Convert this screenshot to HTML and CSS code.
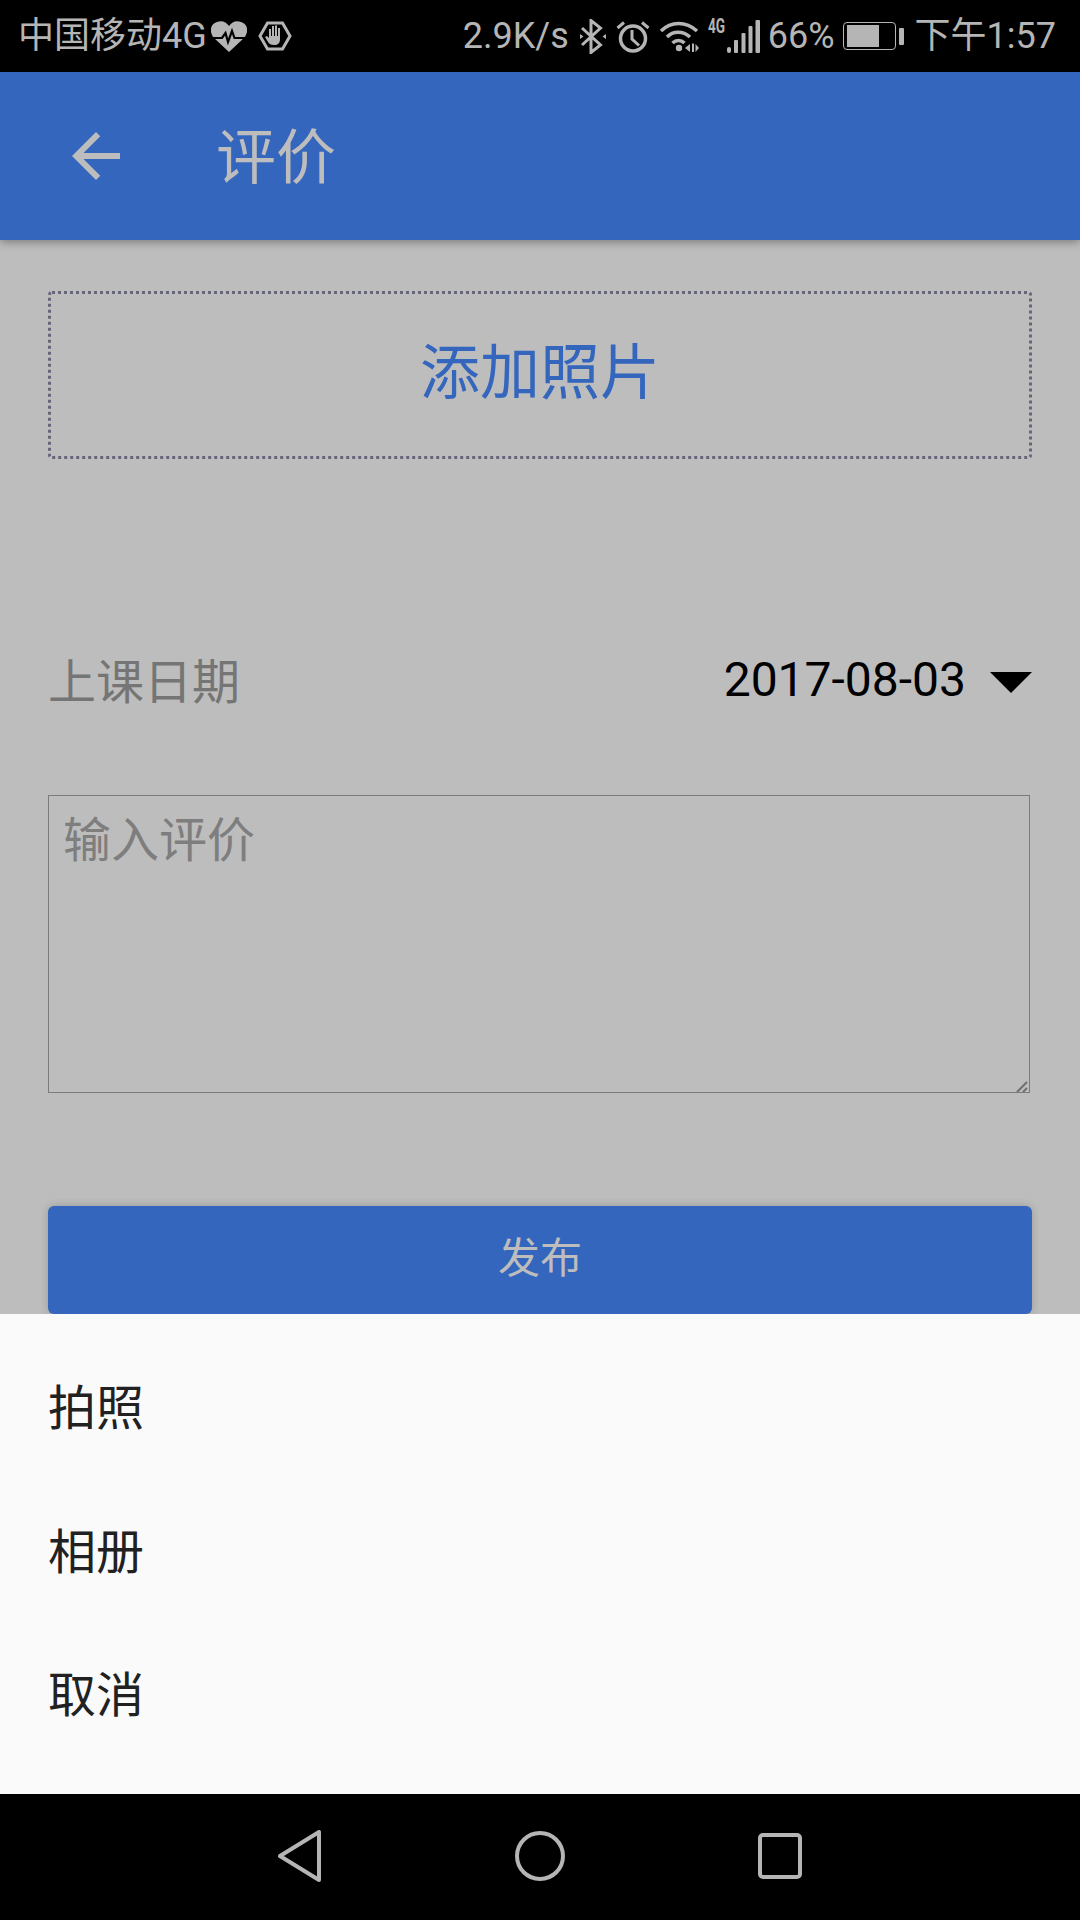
FILE: index.html
```html
<!DOCTYPE html>
<html lang="zh-CN">
<head>
  <meta charset="UTF-8">
  <title>评价</title>
  <link rel="stylesheet" href="styles.css">
</head>
<body>
<div class="screen">
  <div class="status-bar">
    <div class="status-left">
      <span class="carrier">中国移动4G</span>
      <svg class="icon-heart" width="36" height="31" viewBox="0 0 36 31">
        <path fill="#b5b5b5" d="M18 31 L3 17 C-2 11 -1 3 6 1 C11 -1 15 1 18 5 C21 1 25 -1 30 1 C37 3 38 11 33 17 Z"/>
        <path fill="none" stroke="#000" stroke-width="2.2" d="M0 17 H11 L14.5 12 L17 21 L21 10 L23.5 17 H36"/>
      </svg>
      <svg class="icon-hand" width="34" height="30" viewBox="0 0 34 30">
        <path fill="none" stroke="#b5b5b5" stroke-width="3" d="M9.5 2 H24.5 L32 15 L24.5 28 H9.5 L2 15 Z"/>
        <path fill="#b5b5b5" d="M11 8 h2 v7 h1 V5 h2 v10 h1 V4.500 h2 V15 h1 V7 h2 v11 c0 4 -2 6 -6 6 c-3 0 -5 -1 -6 -3 l-3 -5 l2 -1 l2 2 Z"/>
      </svg>
    </div>
    <div class="status-right">
      <span class="speed">2.9K/s</span>
      <svg class="icon-bt" width="26" height="35" viewBox="0 0 26 35">
        <path fill="none" stroke="#b5b5b5" stroke-width="3" d="M2 9 L20.500 26 L11 33.500 V1.500 L20.500 9 L2 26"/>
        <path fill="#b5b5b5" d="M0 15 L3.500 17.500 L0 20 Z M26 15 L22.500 17.500 L26 20 Z"/>
      </svg>
      <svg class="icon-alarm" width="34" height="33" viewBox="0 0 34 33">
        <circle cx="17" cy="18.500" r="12.500" fill="none" stroke="#b5b5b5" stroke-width="3.500"/>
        <path fill="none" stroke="#b5b5b5" stroke-width="3" d="M16 10 V19 L23 25.500 M1.500 8 L8 2.500 M32.500 8 L26 2.500"/>
      </svg>
      <svg class="icon-wifi" width="40" height="32" viewBox="0 0 40 32">
        <path fill="none" stroke="#b5b5b5" stroke-width="3.500" d="M2 11 C12 1 27 1 38 11 M8 17 C14 10.500 24 10.500 31 17 M13.500 23 C17 19.500 22 19.500 25.500 23"/>
        <circle cx="20" cy="28" r="3.200" fill="#b5b5b5"/>
        <path fill="#b5b5b5" d="M26 28 L31 24 V32 Z M33 23.500 H35 V32.500 H33 Z M36.500 24 L40 28 L36.500 32 Z"/>
      </svg>
      <span class="net-type">4G</span>
      <svg class="icon-signal" width="33" height="33" viewBox="0 0 33 33">
        <rect x="0" y="27" width="4" height="6" rx="2" fill="#b5b5b5"/>
        <rect x="7" y="20" width="4" height="13" rx="1" fill="#b5b5b5"/>
        <rect x="14.500" y="13" width="4" height="20" rx="1" fill="#b5b5b5"/>
        <rect x="21.500" y="6" width="4" height="27" rx="1" fill="#b5b5b5"/>
        <rect x="28.500" y="0" width="4.500" height="33" rx="1" fill="#b5b5b5"/>
      </svg>
      <span class="battery-text">66%</span>
      <div class="battery">
        <div class="battery-body">
          <div class="battery-fill"></div>
        </div>
        <div class="battery-nub"></div>
      </div>
      <span class="clock">下午1:57</span>
    </div>
  </div>

  <div class="app-bar">
    <svg class="back" width="72" height="72" viewBox="0 0 24 24">
      <path fill="#bdbdbd" d="M20 11H7.83l5.59-5.59L12 4l-8 8 8 8 1.41-1.41L7.83 13H20v-2z"/>
    </svg>
    <span class="title">评价</span>
  </div>

  <div class="content">
    <div class="add-photo">添加照片</div>
    <div class="date-row">
      <span class="date-label">上课日期</span>
      <div class="date-picker">
        <span class="date-value">2017-08-03</span>
        <span class="date-arrow"></span>
      </div>
    </div>
    <div class="comment-box">
      <textarea class="comment" placeholder="输入评价"></textarea>
      <svg class="comment-grip" width="12" height="12" viewBox="0 0 12 12">
        <path fill="none" stroke="#6f6f6f" stroke-width="2" d="M1 12 L11 2 M7 12 L11 8"/>
      </svg>
    </div>
    <div class="publish">发布</div>
  </div>

  <div class="sheet">
    <div class="sheet-item">拍照</div>
    <div class="sheet-item">相册</div>
    <div class="sheet-item">取消</div>
  </div>

  <div class="nav-bar">
    <svg width="50" height="52" viewBox="0 0 50 52">
      <path fill="none" stroke="#b5b5b5" stroke-width="4" stroke-linejoin="round" d="M5 26 L44 2 V50 Z"/>
    </svg>
    <svg width="50" height="52" viewBox="0 0 50 52">
      <circle cx="25" cy="26" r="23" fill="none" stroke="#b5b5b5" stroke-width="4"/>
    </svg>
    <svg width="50" height="52" viewBox="0 0 50 52">
      <rect x="5" y="5" width="40" height="42" rx="3" fill="none" stroke="#b5b5b5" stroke-width="4"/>
    </svg>
  </div>
</div>
</body>
</html>
```

FILE: styles.css
```css
* {
  box-sizing: border-box;
}
body {
  margin: 0;
  padding: 0;
  background-color: #000;
  font-family: "Noto Sans CJK SC", Roboto, sans-serif;
}
.screen {
  width: 1080px;
  height: 1920px;
  display: flex;
  flex-direction: column;
  overflow: hidden;
}

/* status bar */
.status-bar {
  height: 72px;
  flex-shrink: 0;
  background-color: #000;
  color: #b5b5b5;
  display: flex;
  justify-content: space-between;
  align-items: center;
  padding: 0 24px 0 18px;
  font-family: Roboto, "Noto Sans CJK SC", sans-serif;
  font-size: 36px;
  line-height: 72px;
}
.status-left,
.status-right {
  display: flex;
  align-items: center;
}
.icon-heart {
  margin-left: 4px;
}
.icon-hand {
  margin-left: 11px;
}
.icon-bt {
  margin-left: 11px;
}
.icon-alarm {
  margin-left: 10px;
}
.icon-wifi {
  margin-left: 9px;
}
.net-type {
  width: 17px;
  margin-left: 9px;
  align-self: flex-start;
  margin-top: 19px;
  font-size: 20px;
  line-height: 14px;
  font-weight: 700;
  transform: scaleX(0.68);
  transform-origin: left center;
}
.icon-signal {
  margin-left: 2px;
}
.battery-text {
  margin-left: 8px;
}
.battery {
  display: flex;
  align-items: center;
  margin-left: 8px;
}
.battery-body {
  width: 53px;
  height: 28px;
  border: 1px solid #b5b5b5;
  border-radius: 4px;
  padding: 2px 3px;
}
.battery-fill {
  width: 32px;
  height: 100%;
  background-color: #b5b5b5;
}
.battery-nub {
  width: 5px;
  height: 17px;
  margin-left: 3px;
  background-color: #b5b5b5;
  border-radius: 1px;
}
.clock {
  margin-left: 11px;
}

/* app bar */
.app-bar {
  height: 168px;
  flex-shrink: 0;
  background-color: #3566bd;
  display: flex;
  align-items: center;
  padding-left: 60px;
  box-shadow: 0 3px 8px rgba(0, 0, 0, 0.3);
  position: relative;
}
.title {
  margin-left: 84px;
  padding-bottom: 8px;
  font-size: 60px;
  color: #bdbdbd;
}

/* form */
.content {
  flex: 1;
  background-color: #bdbdbd;
  padding: 51px 48px 0;
}
.add-photo {
  height: 168px;
  padding-bottom: 16px;
  border: 3px dotted #66667a;
  border-radius: 4px;
  color: #3566bd;
  font-size: 60px;
  display: flex;
  align-items: center;
  justify-content: center;
}
.date-row {
  height: 96px;
  margin-top: 173px;
  display: flex;
  justify-content: space-between;
  align-items: center;
}
.date-label {
  padding-bottom: 5px;
  font-size: 48px;
  color: #757575;
}
.date-picker {
  display: flex;
  align-items: center;
}
.date-value {
  padding-bottom: 2px;
  font-family: Roboto, sans-serif;
  font-size: 48px;
  color: #000;
}
.date-arrow {
  width: 0;
  height: 0;
  margin-top: 5px;
  margin-left: 24px;
  border-left: 21px solid transparent;
  border-right: 21px solid transparent;
  border-top: 21px solid #000;
}
.comment-box {
  width: 982px;
  height: 298px;
  margin-top: 67px;
  position: relative;
}
.comment {
  display: block;
  width: 100%;
  height: 100%;
  margin: 0;
  padding: 8px 14px;
  border: 1px solid #7b7b7b;
  border-radius: 0;
  background: transparent;
  font-family: "Noto Sans CJK SC", sans-serif;
  font-size: 48px;
  line-height: 64px;
  resize: none;
}
.comment::placeholder {
  color: #7e7e7e;
}
.comment-grip {
  position: absolute;
  right: 2px;
  bottom: 1px;
}
.publish {
  height: 108px;
  margin-top: 113px;
  background-color: #3566bd;
  border-radius: 6px;
  box-shadow: 0 0 8px rgba(0, 0, 0, 0.2);
  color: #bdbdbd;
  font-size: 42px;
  display: flex;
  align-items: center;
  justify-content: center;
  padding-bottom: 12px;
}

/* bottom sheet */
.sheet {
  height: 480px;
  flex-shrink: 0;
  background-color: #fafafa;
  padding: 18px 48px 0;
  position: relative;
}
.sheet-item {
  height: 143.8px;
  display: flex;
  align-items: center;
  font-size: 48px;
  color: #212121;
}

/* nav bar */
.nav-bar {
  height: 126px;
  flex-shrink: 0;
  background-color: #000;
  display: flex;
  justify-content: center;
  align-items: center;
  gap: 190px;
  padding-bottom: 2px;
}
```
